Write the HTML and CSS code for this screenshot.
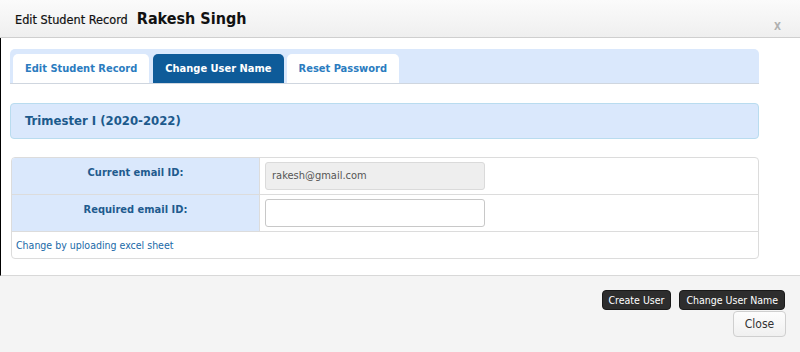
FILE: index.html
```html
<!DOCTYPE html>
<html>
<head>
<meta charset="utf-8">
<link rel="stylesheet" href="styles.css">
</head>
<body>
<div class="dialog">
  <div class="header">
    <span class="title">Edit Student Record</span>
    <span class="name">Rakesh Singh</span>
    <span class="close-x">X</span>
  </div>
  <div class="content">
    <div class="tabbar">
      <div class="tab">Edit Student Record</div>
      <div class="tab active">Change User Name</div>
      <div class="tab">Reset Password</div>
    </div>
    <div class="term">Trimester I (2020-2022)</div>
    <div class="grid">
      <div class="row">
        <div class="label">Current email ID:</div>
        <div class="value"><div class="input readonly">rakesh@gmail.com</div></div>
      </div>
      <div class="row">
        <div class="label">Required email ID:</div>
        <div class="value"><div class="input"></div></div>
      </div>
      <div class="row last">
        <a class="link">Change by uploading excel sheet</a>
      </div>
    </div>
  </div>
  <div class="footer">
    <div class="actions">
      <button class="btn dark">Create User</button>
      <button class="btn dark">Change User Name</button>
    </div>
    <div class="actions">
      <button class="btn light">Close</button>
    </div>
  </div>
</div>
</body>
</html>
```

FILE: styles.css
```css
* { box-sizing: border-box; }
html, body { margin: 0; padding: 0; }
body {
  width: 800px;
  height: 352px;
  overflow: hidden;
  font-family: "DejaVu Sans Condensed", "DejaVu Sans", sans-serif;
  background: #f4f4f4;
}
.dialog { display: flex; flex-direction: column; height: 352px; }
.header {
  height: 38px;
  border-bottom: 1px solid #cfcfcf;
  background: linear-gradient(#fbfbfb, #efefef);
  display: flex;
  align-items: center;
  padding-left: 15px;
  position: relative;
}
.title { font-size: 12.6px; color: #111; margin-right: 9px; padding-top: 2px; -webkit-text-stroke: 0.2px #111; }
.name { font-size: 16px; font-weight: bold; color: #111; }
.close-x {
  position: absolute;
  right: 19px;
  top: 21px;
  font-size: 10px;
  color: #b0b0b0;
  font-weight: bold;
}
.content {
  background: #fff;
  border-left: 1px solid #000;
  padding: 11px 41px 16px 9px;
  border-bottom: 1px solid #d8d8d8;
  height: 238px;
}
.tabbar {
  background: #dae8fc;
  border-radius: 5px 5px 0 0;
  border-bottom: 1px solid #cfd6df;
  padding: 5px 0 0 3px;
  display: flex;
  gap: 3px;
  height: 35px;
}
.tab {
  background: #fff;
  border-radius: 5px 5px 0 0;
  color: #2b7cbf;
  font-size: 11px;
  font-weight: bold;
  padding: 0 12px;
  height: 29px;
  line-height: 30px;
}
.tab.active { background: #0e5b99; color: #fff; margin-left: 1px; }
.term {
  margin-top: 19px;
  height: 36px;
  background: #dae8fc;
  border: 1px solid #b9dcef;
  border-radius: 4px;
  color: #1c5a8c;
  font-size: 13px;
  font-weight: bold;
  padding-left: 14px;
  line-height: 34px;
}
.grid {
  margin-top: 18px;
  margin-left: 1px;
  border: 1px solid #dcdcdc;
  border-radius: 4px;
  overflow: hidden;
}
.row {
  display: flex;
  height: 37px;
  border-bottom: 1px solid #dcdcdc;
}
.row.last { border-bottom: 0; height: 26px; align-items: center; }
.label {
  width: 248px;
  background: #dae8fc;
  border-right: 1px solid #dcdcdc;
  color: #1f5b8e;
  font-size: 11px;
  font-weight: bold;
  text-align: center;
  padding-top: 8px;
}
.value { padding: 4px 0 0 5px; }
.input {
  width: 220px;
  height: 28px;
  border: 1px solid #c8c8c8;
  border-radius: 3px;
  background: #fff;
  font-size: 11px;
  color: #555;
  padding-left: 6px;
  line-height: 26px;
}
.input.readonly { background: #eee; border-color: #dadada; }
.link {
  color: #1a6aa8;
  font-size: 10.5px;
  padding-left: 4px;
  padding-bottom: 1px;
}
.footer {
  flex: 1;
  background: #f4f4f4;
  padding: 14px 15px 0 0;
  display: flex;
  flex-direction: column;
  align-items: flex-end;
}
.actions { display: flex; gap: 8px; }
.btn {
  font-family: "DejaVu Sans Condensed", "DejaVu Sans", sans-serif;
  border-radius: 4px;
  cursor: pointer;
}
.btn.dark {
  background: #2d2d2d;
  color: #fff;
  border: 1px solid #1a1a1a;
  font-size: 10.5px;
  height: 20px;
  padding: 0 6px;
  line-height: 18px;
}
.btn.light {
  margin-top: 1px;
  background: linear-gradient(#fdfdfd, #f0f0f0);
  border: 1px solid #cfcfcf;
  color: #333;
  font-size: 12px;
  height: 26px;
  width: 53px;
  padding: 0;
  margin-right: -1px;
}
```
